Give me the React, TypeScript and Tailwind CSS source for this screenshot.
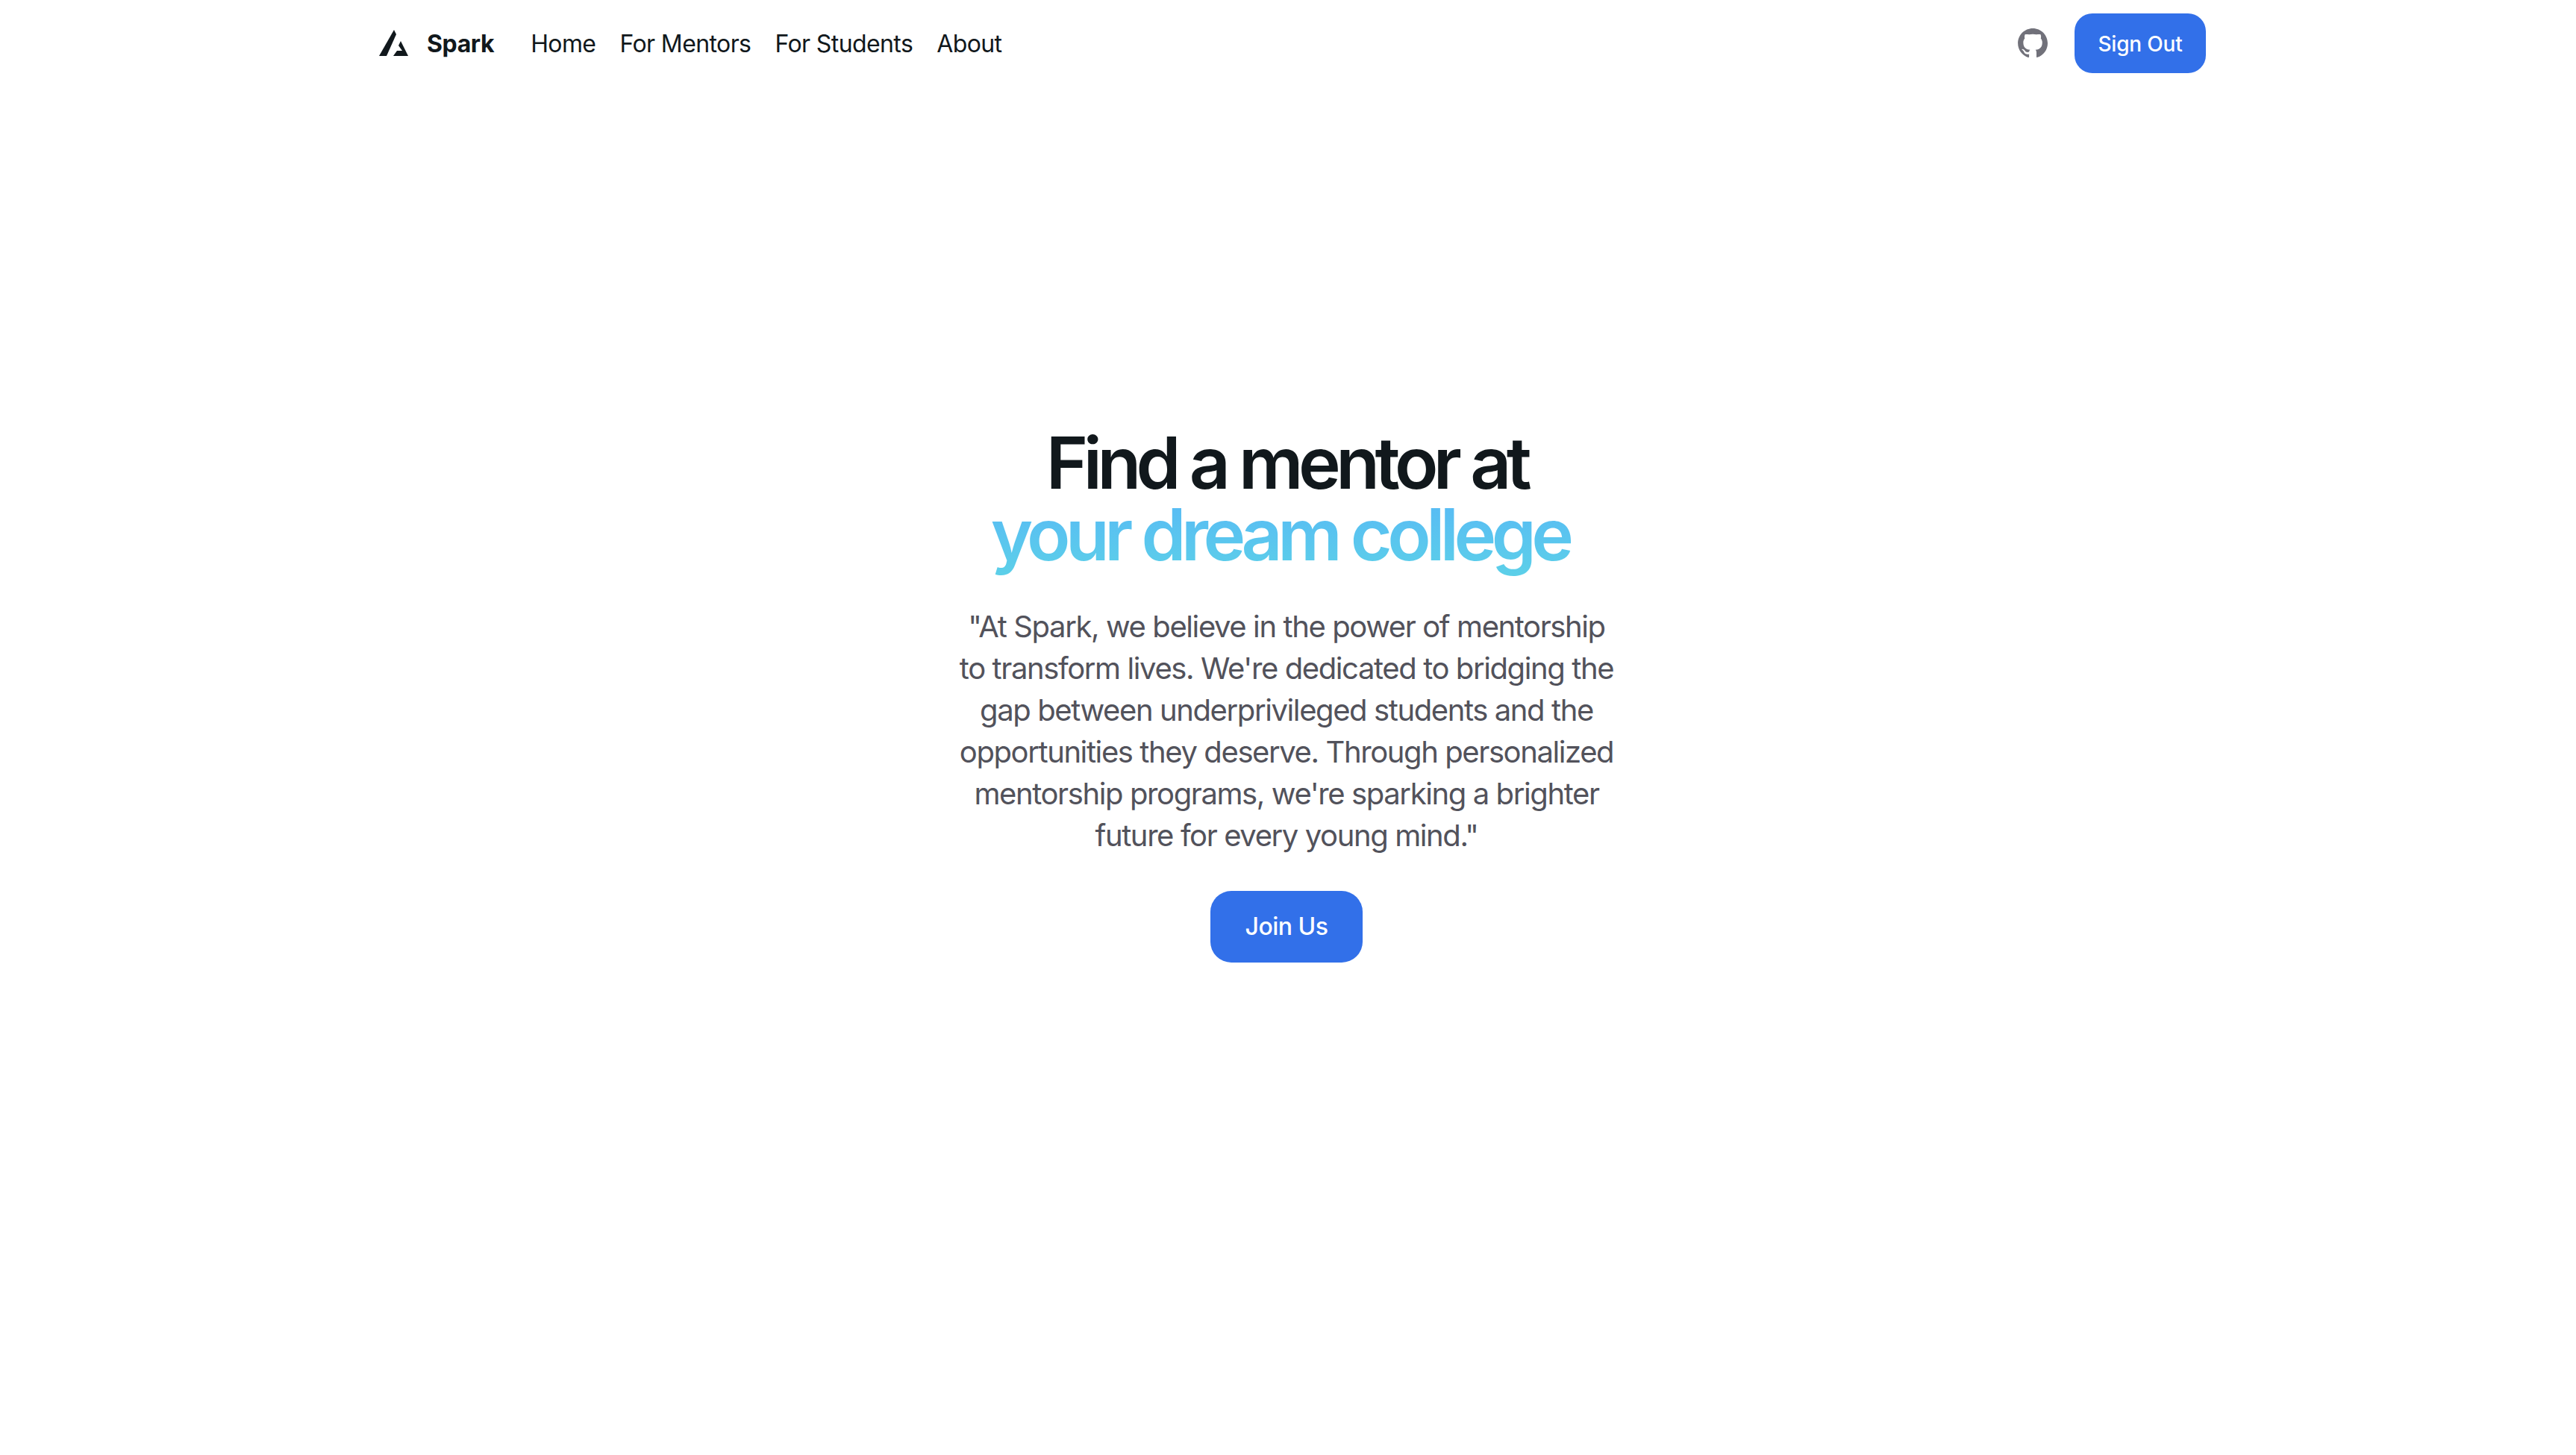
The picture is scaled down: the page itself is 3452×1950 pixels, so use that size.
const navItems = ["Home", "For Mentors", "For Students", "About"];

function SparkLogo() {
  return (
    <svg viewBox="0 0 40 36" className="h-[36px] w-[40px]" fill="#11181c">
      <path d="M20 0 23 6 10 35 0 35Z" />
      <path d="M29 15 39 35 19 35 24 28 31 28 26 21Z" />
    </svg>
  );
}

function GithubIcon() {
  return (
    <svg viewBox="0 0 24 24" className="h-12 w-12" fill="#71717a">
      <path
        fillRule="evenodd"
        clipRule="evenodd"
        d="M12.026 2c-5.509 0-9.974 4.465-9.974 9.974 0 4.406 2.857 8.145 6.821 9.465.499.09.679-.217.679-.481 0-.237-.008-.865-.011-1.696-2.775.602-3.361-1.338-3.361-1.338-.452-1.152-1.107-1.459-1.107-1.459-.905-.619.069-.605.069-.605 1.002.07 1.527 1.028 1.527 1.028.89 1.524 2.336 1.084 2.902.829.091-.645.351-1.085.635-1.334-2.214-.251-4.542-1.107-4.542-4.93 0-1.087.389-1.979 1.024-2.675-.101-.253-.446-1.268.099-2.64 0 0 .837-.269 2.742.021a9.582 9.582 0 0 1 2.496-.336 9.554 9.554 0 0 1 2.496.336c1.906-.291 2.742-.021 2.742-.021.545 1.372.2 2.387.099 2.64.64.696 1.024 1.587 1.024 2.675 0 3.833-2.33 4.675-4.552 4.922.355.308.675.916.675 1.846 0 1.334-.012 2.41-.012 2.737 0 .267.178.577.687.479C19.146 20.115 22 16.379 22 11.974 22 6.465 17.535 2 12.026 2z"
      />
    </svg>
  );
}

export default function App() {
  return (
    <div className="min-h-[1950px] bg-white font-['Inter',sans-serif] text-[#11181c]">
      <nav className="mx-auto flex h-[116px] w-[2460px] items-center justify-between">
        <div className="flex items-center">
          <div className="ml-[12px] flex items-center gap-[24px]">
            <SparkLogo />
            <span className="pt-[2px] text-[32px] font-bold tracking-[-0.4px]">Spark</span>
          </div>
          <ul className="ml-[49px] flex gap-[32px] pt-[2px]">
            {navItems.map((item) => (
              <li key={item} className="text-[32px] tracking-[-0.6px]">
                {item}
              </li>
            ))}
          </ul>
        </div>
        <div className="flex items-center gap-[32px]">
          <GithubIcon />
          <button className="h-[80px] w-[176px] rounded-[24px] bg-[#3270e9] pt-[2px] text-[28px] font-medium tracking-[-0.2px] text-white">
            Sign Out
          </button>
        </div>
      </nav>

      <main className="flex flex-col items-center pt-[456px] pr-[4px]">
        <h1 className="text-center text-[96px] leading-[96px] font-semibold tracking-[-6.5px]">
          <span>Find a mentor at</span>
          <br />
          <span className="bg-gradient-to-b from-[#58b8f6] to-[#5cd0e8] bg-clip-text text-transparent">
            your dream college&nbsp;
          </span>
        </h1>
        <p className="mt-[48px] w-[896px] text-center text-[40px] leading-[56px] tracking-[-1.4px] text-[#52525b]">
          "At Spark, we believe in the power of mentorship to transform lives. We're dedicated to bridging the gap
          between underprivileged students and the opportunities they deserve. Through personalized mentorship
          programs, we're sparking a brighter future for every young mind."
        </p>
        <button className="mt-[46px] h-[96px] w-[204px] rounded-[28px] bg-[#3270e9] text-[32px] font-medium tracking-[-0.5px] text-white">
          Join Us
        </button>
      </main>
    </div>
  );
}
